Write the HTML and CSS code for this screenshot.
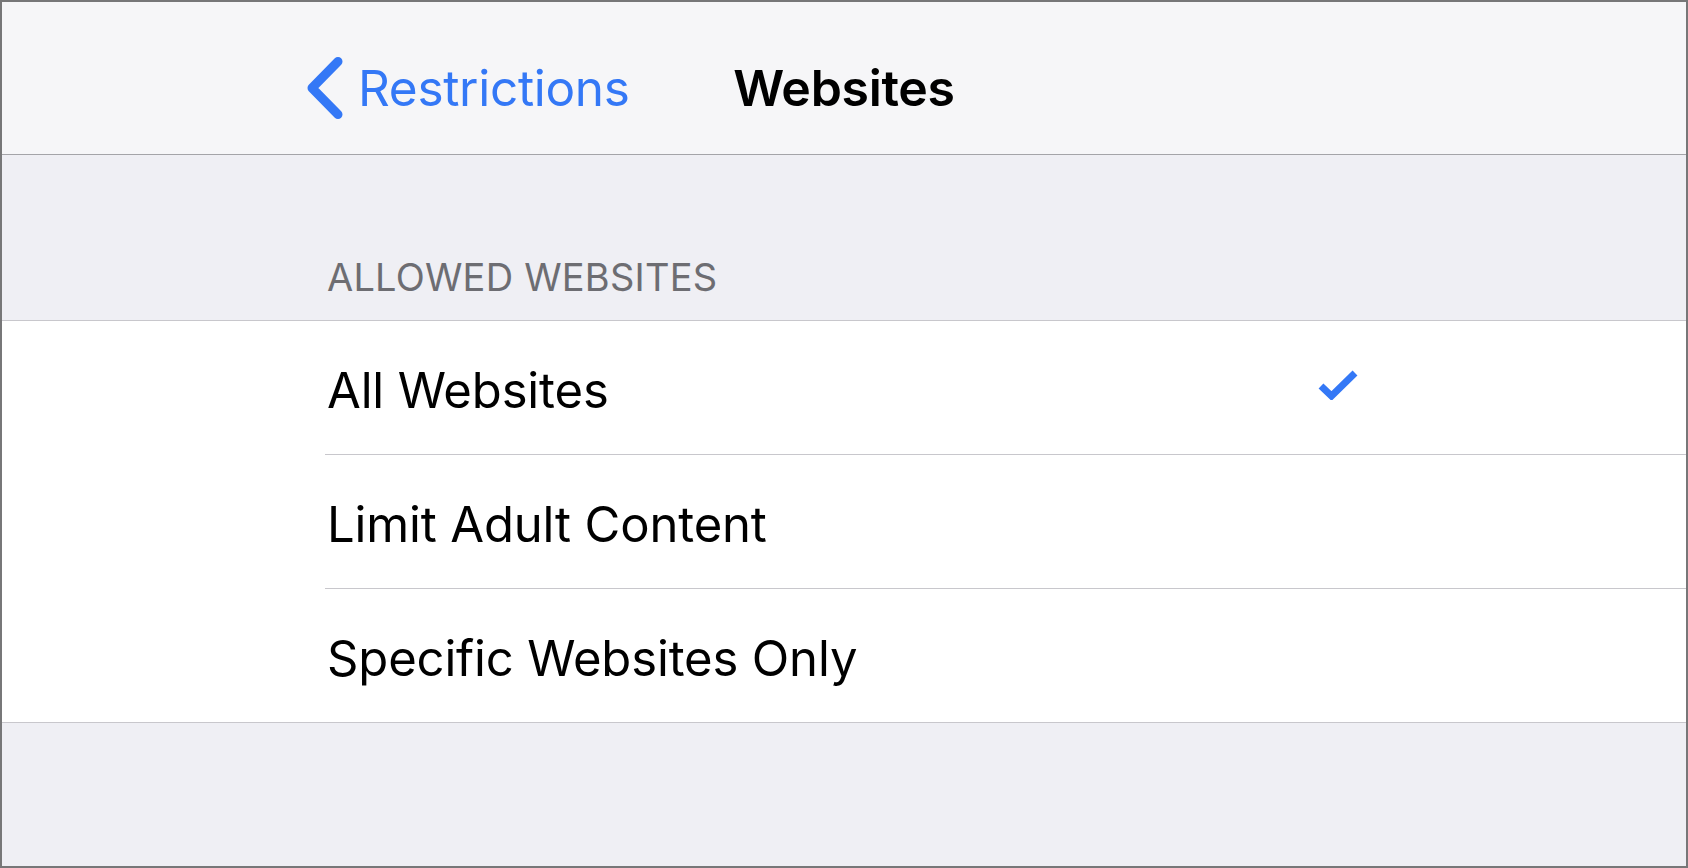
FILE: index.html
```html
<!DOCTYPE html>
<html lang="en">
<head>
<meta charset="utf-8">
<title>Websites</title>
<link rel="stylesheet" href="styles.css">
</head>
<body>
<div class="frame">
  <header class="navbar">
    <a class="back" href="#">
      <svg class="chevron" width="36" height="62" viewBox="0 0 36 62" aria-hidden="true">
        <path d="M31 4.5 L5 31 L31 57.5" fill="none" stroke="#3478f6" stroke-width="9" stroke-linecap="round" stroke-linejoin="round"/>
      </svg>
      <span class="back-label">Restrictions</span>
    </a>
    <h1 class="title">Websites</h1>
    <div class="nav-spacer"></div>
  </header>
  <main class="content">
    <div class="section-header">ALLOWED WEBSITES</div>
    <ul class="group">
      <li class="row">
        <div class="row-inner">
          <span class="row-label">All Websites</span>
          <svg class="check" width="40" height="31" viewBox="0 0 40 31" aria-hidden="true">
            <path d="M3 17 L13.5 27 L37 4" fill="none" stroke="#3478f6" stroke-width="7"/>
          </svg>
        </div>
      </li>
      <li class="row">
        <div class="row-inner">
          <span class="row-label">Limit Adult Content</span>
        </div>
      </li>
      <li class="row">
        <div class="row-inner">
          <span class="row-label">Specific Websites Only</span>
        </div>
      </li>
    </ul>
    <div class="footer-space"></div>
  </main>
</div>
</body>
</html>
```
FILE: styles.css
```css
* { box-sizing: border-box; }
html, body { margin: 0; padding: 0; }
body {
  font-family: Inter, "Noto Sans", "Liberation Sans", sans-serif;
  background: #efeff4;
}
.frame {
  width: 1688px;
  height: 868px;
  border: 2px solid #777778;
  display: flex;
  flex-direction: column;
  overflow: hidden;
  background: #efeff4;
}
.navbar {
  height: 153px;
  flex: none;
  background: #f6f6f8;
  border-bottom: 1px solid #a4a4a8;
  display: grid;
  grid-template-columns: 1fr auto 1fr;
  align-items: center;
  padding-top: 20px;
}
.back {
  justify-self: start;
  margin-left: 305px;
  display: flex;
  align-items: center;
  gap: 15px;
  text-decoration: none;
  color: #3478f6;
}
.chevron { display: block; }
.back-label {
  font-size: 49.5px;
  letter-spacing: -0.3px;
  line-height: 58px;
}
.title {
  margin: 0;
  font-size: 50px;
  font-weight: 600;
  letter-spacing: -0.3px;
  line-height: 58px;
  color: #000;
}
.content {
  flex: 1;
  display: flex;
  flex-direction: column;
}
.section-header {
  height: 165px;
  display: flex;
  align-items: flex-end;
  padding-left: 325px;
  padding-bottom: 20px;
  font-size: 38px;
  line-height: 46px;
  letter-spacing: 0.2px;
  color: #6d6d72;
}
.group {
  list-style: none;
  margin: 0;
  padding: 0;
  background: #fff;
  border-top: 1px solid #c8c7cc;
  border-bottom: 1px solid #c8c7cc;
}
.row {
  padding-left: 323px;
}
.row-inner {
  height: 134px;
  display: flex;
  align-items: center;
  justify-content: space-between;
  padding-left: 2px;
  padding-right: 328px;
  padding-top: 6px;
  border-bottom: 1px solid #c8c7cc;
}
.row:last-child .row-inner {
  border-bottom: none;
  height: 133px;
}
.row-label {
  font-size: 49px;
  line-height: 58px;
  letter-spacing: -0.15px;
  color: #000;
}
.check {
  display: block;
  margin-top: -12px;
}
.footer-space {
  flex: 1;
}
```
